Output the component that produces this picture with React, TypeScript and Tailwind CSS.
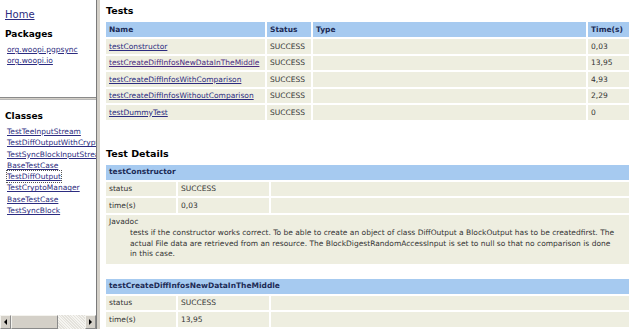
const FONT = "font-['DejaVu_Sans',Verdana,sans-serif]";

const TESTS = [
  { name: "testConstructor", time: "0,03" },
  { name: "testCreateDiffInfosNewDataInTheMiddle", time: "13,95", visited: true },
  { name: "testCreateDiffInfosWithComparison", time: "4,93" },
  { name: "testCreateDiffInfosWithoutComparison", time: "2,29" },
  { name: "testDummyTest", time: "0" },
];

const CLASSES = [
  "TestTeeInputStream",
  "TestDiffOutputWithCryptoManager",
  "TestSyncBlockInputStream",
  "BaseTestCase",
  "TestDiffOutput",
  "TestCryptoManager",
  "BaseTestCase",
  "TestSyncBlock",
];

const JAVADOC = [
  "tests if the constructor works correct. To be able to create an object of class DiffOutput a BlockOutput has to be createdfirst. The",
  "actual File data are retrieved from an resource. The BlockDigestRandomAccessInput is set to null so that no comparison is done",
  "in this case.",
];

function Scrollbar() {
  return (
    <div className="flex h-[14px] w-full shrink-0 items-stretch bg-[#ecebe6]">
      <div className="flex w-[11px] items-center justify-center border border-[#f4f3ee] border-r-[#8a8a8a] border-b-[#8a8a8a] bg-[#d4d0c8]">
        <div className="h-0 w-0 border-y-[3px] border-r-[3px] border-y-transparent border-r-black" />
      </div>
      <div className="w-[47px] border border-[#f4f3ee] border-r-[#8a8a8a] border-b-[#8a8a8a] bg-[#d4d0c8]" />
      <div className="flex-1 bg-[repeating-linear-gradient(45deg,#e4e2dc_0px,#e4e2dc_1px,#f6f5f1_1px,#f6f5f1_2px)]" />
      <div className="flex w-[11px] items-center justify-center border border-[#f4f3ee] border-r-[#8a8a8a] border-b-[#8a8a8a] bg-[#d4d0c8]">
        <div className="h-0 w-0 border-y-[3px] border-l-[3px] border-y-transparent border-l-black" />
      </div>
    </div>
  );
}

function DetailTable({
  name,
  time,
  javadoc,
}: {
  name: string;
  time: string;
  javadoc?: string[];
}) {
  return (
    <table className="w-[527px] table-fixed border-separate border-spacing-[2px] text-[7.5px] text-[#333]">
      <colgroup>
        <col className="w-[70px]" />
        <col className="w-[91px]" />
        <col />
      </colgroup>
      <tbody>
        <tr>
          <th
            colSpan={3}
            className="h-[15px] bg-[#a6caf0] px-[3px] py-0 text-left font-bold text-[#1c2a55]"
          >
            {name}
          </th>
        </tr>
        <tr>
          <td className="h-[14.5px] bg-[#eeeee0] px-[3px] py-0">status</td>
          <td className="bg-[#eeeee0] px-[3px] py-0">SUCCESS</td>
          <td className="bg-[#eeeee0]" />
        </tr>
        <tr>
          <td className="h-[14.5px] bg-[#eeeee0] px-[3px] py-0">time(s)</td>
          <td className="bg-[#eeeee0] px-[3px] py-0">{time}</td>
          <td className="bg-[#eeeee0]" />
        </tr>
        {javadoc && (
          <tr>
            <td
              colSpan={3}
              className="h-[44px] bg-[#eeeee0] px-[3px] pt-[2px] pb-[4px] align-top leading-[10.5px]"
            >
              <div>Javadoc</div>
              <div className="mt-[1px] ml-[21px]">
                {javadoc.map((line) => (
                  <div key={line} className="whitespace-nowrap">
                    {line}
                  </div>
                ))}
              </div>
            </td>
          </tr>
        )}
      </tbody>
    </table>
  );
}

export default function App() {
  return (
    <div className={`flex h-[329px] w-[640px] overflow-hidden bg-white ${FONT}`}>
      <div className="flex w-[97px] shrink-0 flex-col border-r border-[#7a7a7a]">
        <div className="h-[97px] shrink-0 px-[5px] pt-[8px]">
          <a href="#" className="block text-[10px] leading-[14px] text-[#2c2c80] underline">
            Home
          </a>
          <h2 className="mt-[6px] text-[9px] leading-[12px] font-bold text-black">Packages</h2>
          <div className="mt-[4px] flex flex-col pl-[2px] text-[7.5px] leading-[11px]">
            <a href="#" className="text-[#2c2c80] underline">org.woopi.pgpsync</a>
            <a href="#" className="text-[#2c2c80] underline">org.woopi.io</a>
          </div>
        </div>
        <div className="h-[3px] shrink-0 border-t border-b border-t-[#8a8a8a] border-b-[#b8b8b8] bg-[#d4d0c8]" />
        <div className="flex min-h-0 flex-1 flex-col">
          <div className="flex-1 overflow-hidden px-[5px] pt-[10px]">
            <h2 className="text-[9px] leading-[12px] font-bold text-black">Classes</h2>
            <div className="mt-[4px] flex flex-col pl-[2px] text-[7.5px] leading-[11.3px]">
              {CLASSES.map((c, i) => (
                <a
                  key={i}
                  href="#"
                  className={`w-max whitespace-nowrap text-[#2c2c80] underline ${
                    c === "TestDiffOutput" ? "outline-1 outline-dotted outline-[#555]" : ""
                  }`}
                >
                  {c}
                </a>
              ))}
            </div>
          </div>
          <Scrollbar />
        </div>
      </div>
      <div className="w-[3px] shrink-0 bg-[#d4d0c8]" />
      <div className="min-w-0 flex-1 overflow-hidden pl-[4px] pt-[5px]">
        <h3 className="pl-[2px] text-[9.5px] leading-[12px] font-bold text-black">Tests</h3>
        <table className="mt-[3px] w-[527px] table-fixed border-separate border-spacing-[2px] text-[7.5px] text-[#333]">
          <colgroup>
            <col className="w-[159px]" />
            <col className="w-[44px]" />
            <col />
            <col className="w-[41px]" />
          </colgroup>
          <thead>
            <tr className="text-left font-bold text-[#1c2a55]">
              <th className="h-[15px] bg-[#a6caf0] px-[3px] py-0">Name</th>
              <th className="bg-[#a6caf0] px-[3px] py-0">Status</th>
              <th className="bg-[#a6caf0] px-[3px] py-0">Type</th>
              <th className="bg-[#a6caf0] px-[3px] py-0">Time(s)</th>
            </tr>
          </thead>
          <tbody>
            {TESTS.map((t) => (
              <tr key={t.name}>
                <td className="h-[14.5px] bg-[#eeeee0] px-[3px] py-0">
                  <a
                    href="#"
                    className={`whitespace-nowrap underline ${
                      t.visited ? "text-[#4a2a80]" : "text-[#2c2c80]"
                    }`}
                  >
                    {t.name}
                  </a>
                </td>
                <td className="bg-[#eeeee0] px-[3px] py-0">SUCCESS</td>
                <td className="bg-[#eeeee0]" />
                <td className="bg-[#eeeee0] px-[3px] py-0">{t.time}</td>
              </tr>
            ))}
          </tbody>
        </table>
        <h3 className="mt-[26px] pl-[2px] text-[9.5px] leading-[12px] font-bold text-black">
          Test Details
        </h3>
        <div className="mt-[3px]">
          <DetailTable name="testConstructor" time="0,03" javadoc={JAVADOC} />
        </div>
        <div className="mt-[11px]">
          <DetailTable name="testCreateDiffInfosNewDataInTheMiddle" time="13,95" />
        </div>
      </div>
    </div>
  );
}
